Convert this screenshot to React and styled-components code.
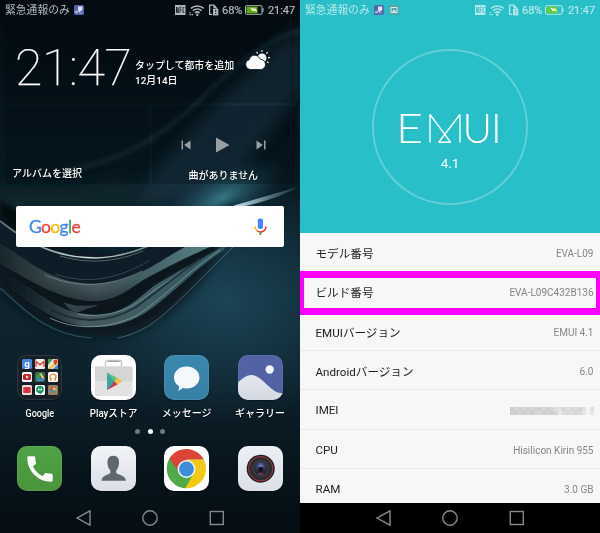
import React from "react";
import styled, { createGlobalStyle } from "styled-components";
import { MdCall, MdSkipNext, MdSkipPrevious } from "react-icons/md";

const GlobalStyle = createGlobalStyle`
  * { box-sizing: border-box; }
  body { margin: 0; background: #000; }
`;

const Screens = styled.div`
  display: flex;
  width: 600px;
  height: 533px;
  overflow: hidden;
  font-family: Roboto, "Noto Sans CJK JP", sans-serif;
`;

const Phone = styled.section`
  position: relative;
  isolation: isolate;
  display: flex;
  flex-direction: column;
  width: 300px;
  height: 533px;
  overflow: hidden;
  background: ${(p) => p.$bg};
`;

/* Status bar */
const Bar = styled.header`
  display: flex;
  align-items: center;
  flex: none;
  height: 20px;
  padding: 0 5px;
  font-size: 11px;
  line-height: 20px;
  white-space: nowrap;
  color: ${(p) => p.$color};
  svg { display: block; flex: none; }
`;
const Carrier = styled.span`
  width: 66px;
  margin: 1px 3px 0 0;
  font-size: 10.8px;
`;
const BarIcons = styled.div`
  display: flex;
  align-items: center;
  margin-left: auto;
`;
const Percent = styled.span`
  width: 21px;
  margin: 1px 2px 0 3px;
  -webkit-text-stroke: 0.2px currentColor;
`;
const Time = styled.span`
  width: 27px;
  margin: 1px 0 0 4px;
  letter-spacing: -0.08px;
  -webkit-text-stroke: 0.2px currentColor;
`;
const Notices = styled.div`
  display: flex;
  gap: 5px;
`;

function StatusBar({ color, hole, green, picture }) {
  return (
    <Bar $color={color}>
      <Carrier>緊急通報のみ</Carrier>
      <Notices>
        <svg width="10" height="10" viewBox="0 0 10 10">
          <rect width="10" height="10" rx="1.5" fill="#5465ae" />
          <path d="M4 1.5h4.3v4H7L6 7H4.5V5.500H4z" fill="#dfe3f5" />
          <path d="M1.500 6.200h2.200v1.500H1.500zM5 8h3" fill="#b9c1e6" stroke="#b9c1e6" strokeWidth=".7" />
        </svg>
        {picture && (
          <svg width="10" height="10" viewBox="0 0 10 10">
            <rect width="10" height="10" rx="1" fill="#5aa3a8" />
            <rect x="2" y="2.500" width="6" height="5" fill="none" stroke="#d3eef0" strokeWidth="1" />
            <path d="M3 6.800 5 4.500l2.200 2.300z" fill="#d3eef0" />
          </svg>
        )}
      </Notices>
      <BarIcons>
        <svg width="11" height="10" viewBox="0 0 11 10">
          <rect width="10.500" height="10" fill={color} />
          <path d="M1.500 8V2l1.700 6V2M5 8V2h1.700M5 5h1.500M9.500 2.500H8v5h1.500" fill="none" stroke={hole} strokeWidth=".8" />
        </svg>
        <svg width="22" height="12" viewBox="0 0 22 12">
          <g transform="translate(4.300 .2)" fill="none" stroke={color} strokeWidth="1.500">
            <path d="M.6 4.200a9.500 9.500 0 0 1 12.800 0" />
            <path d="M2.700 6.500a6.500 6.500 0 0 1 8.600 0" />
            <path d="M4.700 8.700a3.500 3.500 0 0 1 4.600 0" />
            <circle cx="7" cy="10.500" r=".5" fill={color} />
          </g>
          <path d="M3.500 8.700h1.200M5.500 10.700h1.500M3.500 10.700h1.200" stroke={color} strokeWidth="1.200" />
        </svg>
        <svg width="11" height="12" viewBox="0 0 11 12">
          <path d="M1.600 1.200v9.200h2.600M1 1.200h5l2.200 2.500v1.200" fill="none" stroke={color} strokeWidth="1.300" />
          <path d="M5.500 1v3h2.800z" fill={color} />
          <rect x="5" y="4.700" width="5.300" height="6.700" fill={color} />
          <path d="M7.700 6v2M7.700 9v1" stroke={hole} strokeWidth="1" />
        </svg>
        <Percent>68%</Percent>
        <svg width="19" height="10" viewBox="0 0 19 10">
          <rect x=".5" y=".7" width="16.500" height="8.600" rx="1" fill="none" stroke={color} />
          <rect x="1.500" y="1.700" width="11" height="6.600" fill={green} />
          <path d="M17.500 3h1v4h-1z" fill={color} />
          <path d="m5 2.500 4 1.300 1-.8 2.500 3.700-3.700-1.100-.8.900z" fill="#eaf5df" />
        </svg>
        <Time>21:47</Time>
      </BarIcons>
    </Bar>
  );
}

/* Android navigation keys */
const Nav = styled.nav`
  display: flex;
  justify-content: center;
  align-items: center;
  flex: none;
  height: 30px;
  margin-top: auto;
  gap: 50.500px;
  background: ${(p) => p.$bg};
  svg { display: block; fill: none; stroke: #85898b; stroke-width: 1.400; }
`;
function NavBar({ bg }) {
  return (
    <Nav $bg={bg}>
      <svg width="16" height="16" viewBox="0 0 16 16"><path d="M14 .8v14.400L1.200 8z" /></svg>
      <svg width="16" height="16" viewBox="0 0 16 16"><circle cx="8" cy="8" r="7.200" /></svg>
      <svg width="16" height="16" viewBox="0 0 16 16"><rect x="1.300" y="1.500" width="13" height="13" /></svg>
    </Nav>
  );
}

/* Home screen */
const WallpaperArt = styled.svg`
  position: absolute;
  inset: 0;
  z-index: -1;
`;
function Wallpaper() {
  return (
    <WallpaperArt width="300" height="533" viewBox="0 0 300 533" aria-hidden="true">
      <defs>
        <linearGradient id="base" x1="0" y1="0" x2="0" y2="1">
          <stop offset="0" stopColor="#030b11" />
          <stop offset=".3" stopColor="#071820" />
          <stop offset=".55" stopColor="#0d232e" />
          <stop offset=".7" stopColor="#0d212c" />
          <stop offset=".88" stopColor="#07141c" />
          <stop offset="1" stopColor="#050d13" />
        </linearGradient>
        <radialGradient id="blue"><stop offset="0" stopColor="#1c4658" stopOpacity=".95" /><stop offset="1" stopColor="#1c4354" stopOpacity="0" /></radialGradient>
        <radialGradient id="glow"><stop offset="0" stopColor="#3f8492" stopOpacity=".85" /><stop offset="1" stopColor="#1c4f63" stopOpacity="0" /></radialGradient>
        <linearGradient id="band" gradientUnits="userSpaceOnUse" x1="0" y1="0" x2="210" y2="0">
          <stop offset="0" stopColor="#18272c" /><stop offset=".2" stopColor="#36464a" />
          <stop offset=".45" stopColor="#5f7378" /><stop offset=".65" stopColor="#476468" /><stop offset="1" stopColor="#578085" />
        </linearGradient>
        <linearGradient id="shade" x1="0" y1="0" x2="0" y2="1">
          <stop offset="0" stopColor="#0a161c" stopOpacity="0" /><stop offset=".6" stopColor="#0a161c" stopOpacity=".1" /><stop offset="1" stopColor="#0a161c" stopOpacity=".6" />
        </linearGradient>
        <linearGradient id="band2" gradientUnits="userSpaceOnUse" x1="10" y1="0" x2="225" y2="0">
          <stop offset="0" stopColor="#0f2027" stopOpacity=".4" /><stop offset=".35" stopColor="#46595f" /><stop offset=".65" stopColor="#3d5b63" /><stop offset="1" stopColor="#2f545f" />
        </linearGradient>
        <linearGradient id="edge" gradientUnits="userSpaceOnUse" x1="0" y1="0" x2="180" y2="0">
          <stop offset="0" stopColor="#58757c" /><stop offset=".5" stopColor="#cbe0df" /><stop offset="1" stopColor="#7fa4aa" stopOpacity=".5" />
        </linearGradient>
        <linearGradient id="streak" gradientUnits="userSpaceOnUse" x1="215" y1="0" x2="300" y2="0">
          <stop offset="0" stopColor="#7ab4bd" stopOpacity=".5" /><stop offset=".25" stopColor="#c6e6e9" /><stop offset="1" stopColor="#3f6270" stopOpacity=".3" />
        </linearGradient>
        <filter id="b1"><feGaussianBlur stdDeviation=".6" /></filter>
        <filter id="b2"><feGaussianBlur stdDeviation="2" /></filter>
        <filter id="b3"><feGaussianBlur stdDeviation="4" /></filter>
        <filter id="b8" x="-50%" y="-50%" width="200%" height="200%"><feGaussianBlur stdDeviation="8" /></filter>
      </defs>
      <rect width="300" height="533" fill="url(#base)" />
      <ellipse cx="225" cy="300" rx="160" ry="125" fill="url(#blue)" />
      <g filter="url(#b8)">
        <path d="M300 25 205 115 130 200h90L300 90z" fill="#1c3546" opacity=".75" />
        <path d="M120 175 Q70 195 0 185v35h190z" fill="#12272e" opacity=".7" />
      </g>
      <ellipse cx="222" cy="198" rx="72" ry="28" fill="url(#glow)" transform="rotate(-28 222 198)" />
      <path d="M60 172Q140 160 200 100T300 30" fill="none" stroke="#2c4a58" strokeWidth="4" opacity=".5" filter="url(#b2)" />
      <path d="M0 205C35 240 70 253 105 254C170 250 200 210 240 205C225 240 200 310 130 333C80 345 30 318 0 290z" fill="#08151c" opacity=".9" filter="url(#b3)" />
      <path d="M0 202C20 212 40 225 70 247C40 245 15 235 0 215z" fill="#040c10" filter="url(#b2)" />
      <path d="M0 221C28 243 56 258 96 260C134 259 157 245 175 240L190 247C160 265 140 283 93 284C45 281 20 258 0 240z" fill="#0e1d25" filter="url(#b1)" />
      <g filter="url(#b1)">
        <path d="M0 243C30 262 52 283 93 284C135 283 160 260 185 247H210C180 260 160 271 145 279C128 290 115 301 93 301C58 300 30 280 0 264z" fill="url(#band)" />
        <path d="M0 243C30 262 52 283 93 284C135 283 160 260 185 247H210C180 260 160 271 145 279C128 290 115 301 93 301C58 300 30 280 0 264z" fill="url(#shade)" />
        <path d="M10 276C45 296 60 314 95 315C128 315 140 294 160 282C180 270 200 260 228 243L224 250C170 286 150 327 97 327C58 327 30 303 5 285z" fill="url(#band2)" />
        <path d="M52 291C70 304 110 313 152 277C170 268 195 257 206 250C185 265 165 273 147 287C130 301 118 312 96 313C76 312 62 302 52 291z" fill="#08141b" />
        <path d="M63 302C75 307 86 306 100 305C85 309 82 311 76 313C70 310 67 307 63 302z" fill="#304349" />
        <path d="M0 221C28 243 56 258 96 258C134 257 157 241 190 228" fill="none" stroke="url(#edge)" strokeWidth="1.600" />
        <path d="M60 256C92 265 118 261 143 251" fill="none" stroke="#52686e" strokeWidth="1" />
        <path d="M55 274C85 284 116 281 150 260" fill="none" stroke="#33474f" strokeWidth="1" />
        <path d="M45 275C75 288 108 288 142 271" fill="none" stroke="#84999e" strokeWidth=".9" opacity=".7" />
        <path d="M78 314C105 319 130 310 148 295C165 282 183 272 200 259" fill="none" stroke="#7b989d" strokeWidth=".9" opacity=".9" />
        <path d="M50 309C75 323 106 325 136 307C160 290 176 275 205 256" fill="none" stroke="#15272e" strokeWidth="1.800" opacity=".8" />
        <path d="M50 318C75 330 106 330 136 316C160 301 186 273 220 250" fill="none" stroke="#819ca1" strokeWidth="1" opacity=".85" />
        <path d="M118 338C155 330 170 309 233 247" fill="none" stroke="#6b8289" strokeWidth=".8" opacity=".8" />
        <path d="M0 288C25 310 48 336 92 338" fill="none" stroke="#2b4f5a" strokeWidth="1.200" />
        <path d="M218 211C240 203 268 196 300 186C275 200 250 206 218 211z" fill="url(#streak)" />
      </g>
    </WallpaperArt>
  );
}

const Widgets = styled.div`
  display: grid;
  grid-template-columns: 1fr 1fr;
  gap: 3px;
  height: 159px;
  margin: 5px 5px 0;
`;
const Tile = styled.div`
  background: rgba(0, 8, 14, 0.24);
  color: #fff;
  font-size: 10px;
  font-weight: 500;
  line-height: 15px;
  white-space: nowrap;
  text-shadow: 0 0 2px rgba(0, 0, 0, 0.7);
`;
const WeatherTile = styled(Tile)`
  grid-column: 1 / 3;
  display: flex;
  height: 78px;
  padding-left: 10px;
`;
const Clock = styled.div`
  width: 120px;
  margin: 15px 0 0;
  font-size: 50px;
  font-weight: 100;
  line-height: 56px;
  letter-spacing: -0.4px;
  -webkit-text-stroke: 0.25px #fff;
`;
const City = styled.div`
  width: 111px;
  padding-top: 33px;
  font-size: 9.950px;
`;
const CloudIcon = styled.svg`
  margin-top: 24px;
  margin-left: -1px;
`;
const AlbumTile = styled(Tile)`
  height: 78px;
  padding: 60px 0 0 7px;
`;
const MusicTile = styled(Tile)`
  height: 78px;
  display: flex;
  flex-direction: column;
  align-items: center;
  padding-top: 27px;
`;
const Player = styled.div`
  display: flex;
  align-items: center;
  height: 24px;
  gap: 21.500px;
  margin-bottom: 11px;
  color: #98a0a4;
  svg { display: block; }
`;

const Search = styled.div`
  display: flex;
  align-items: center;
  justify-content: space-between;
  height: 41px;
  margin: 22px 16px 0;
  padding: 0 17px 0 13px;
  border-radius: 2px;
  background: #fff;
`;
const Logo = styled.div`
  font-family: Lato, sans-serif;
  font-size: 17.500px;
  line-height: 24px;
  letter-spacing: -0.65px;
`;
const Letter = styled.span`
  color: ${(p) => p.$c};
  -webkit-text-stroke: 0.3px ${(p) => p.$c};
`;

const AppRow = styled.div`
  display: grid;
  grid-template-columns: repeat(4, 73.400px);
  justify-content: center;
  margin-top: ${(p) => p.$top}px;
`;
const AppItem = styled.div`
  display: flex;
  flex-direction: column;
  align-items: center;
  gap: 5px;
  height: ${(p) => p.$h}px;
  color: #fff;
  font-size: 10px;
  font-weight: 500;
  line-height: 18px;
  white-space: nowrap;
  text-shadow: 0 1px 1px #000;
`;
const AppLabel = styled.span`
  transform: scaleX(${(p) => p.$squeeze || 1});
`;
const AppIcon = styled.div`
  display: flex;
  align-items: center;
  justify-content: center;
  flex: none;
  width: 45px;
  height: 45px;
  overflow: hidden;
  border-radius: 10px;
  background: ${(p) => p.$bg};
  box-shadow: inset 0 0 0 1px ${(p) => p.$ring || "rgba(255,255,255,.08)"}, 0 1px 1px rgba(0, 0, 0, 0.4);
  svg { display: block; }
`;
const Folder = styled.div`
  display: grid;
  grid-template-columns: repeat(3, 10px);
  gap: 2.700px;
`;
const Mini = styled.svg`
  width: 10px;
  height: 10px;
  border-radius: 1.500px;
  background: ${(p) => p.$bg};
`;
const MiniG = styled.span`
  display: grid;
  place-items: center;
  width: 10px;
  height: 10px;
  border-radius: 1.500px;
  background: #4a86e8;
  color: #fff;
  font: 700 9px/9px "Noto Sans", sans-serif;
  text-shadow: none;
  padding-bottom: 2px;
`;
const Pager = styled.div`
  display: flex;
  justify-content: center;
  align-items: center;
  gap: 7.500px;
  height: 6px;
  margin-top: 4px;
`;
const Dot = styled.i`
  width: 5px;
  height: 5px;
  border-radius: 50%;
  background: ${(p) => (p.$on ? "#fff" : "#70787c")};
`;

const googleLetters = [
  ["G", "#4285f4"], ["o", "#ea4335"], ["o", "#fbbc05"],
  ["g", "#4285f4"], ["l", "#34a853"], ["e", "#ea4335"],
];

function GoogleFolder() {
  return (
    <Folder>
      <MiniG>g</MiniG>
      <Mini viewBox="0 0 10 10" $bg="#f1eeee"><path d="M1 8V2.500l4 3.300 4-3.300V8" fill="none" stroke="#d84336" strokeWidth="1.300" /></Mini>
      <Mini viewBox="0 0 10 10" $bg="#e9e4cf">
        <path d="M0 0h5L0 6z" fill="#3f9b57" /><path d="M0 10 10 0v3L3 10z" fill="#f2c53d" /><path d="M5 10l5-5v5z" fill="#4b88e0" />
        <path d="M7.500 6.500C6 4 5.500 3.500 5.500 2.500a2 2 0 0 1 4 0c0 1-.5 1.500-2 4z" fill="#d8402f" />
      </Mini>
      <Mini viewBox="0 0 10 10" $bg="#fff"><rect x="1" y="2" width="8" height="6" rx="1.500" fill="#d02525" /><path d="m4 3.500 3 1.500-3 1.500z" fill="#fff" /></Mini>
      <Mini viewBox="0 0 10 10" $bg="#3f6b56"><path d="M3.500 1.500h3L3 8 1 6z" fill="#31a35f" /><path d="M4.500 1.500h2L9.500 6.500H7z" fill="#f7cf42" /><path d="M3.500 6.500h6L8 9H2z" fill="#4587e8" /></Mini>
      <Mini viewBox="0 0 10 10" $bg="#fff"><path d="M2 6V5a3 3 0 0 1 6 0v1" fill="none" stroke="#ef7d24" strokeWidth="1.200" /><path d="M1.500 5.500h2V9h-1zM8.500 5.500h-2V9h1z" fill="#ef7d24" /></Mini>
      <Mini viewBox="0 0 10 10" $bg="#e9dede"><rect x="1" y="2" width="8" height="6" fill="#d5303a" /><path d="M1.800 2v6M8.200 2v6" stroke="#f6bcbc" strokeWidth=".8" strokeDasharray="1 .7" /></Mini>
      <Mini viewBox="0 0 10 10" $bg="#fff"><circle cx="5" cy="4.600" r="3.800" fill="#159a60" /><path d="M5 7.500h2L5 9.800z" fill="#159a60" /><path d="M3 3.500h1.500v2H3zM5.500 3.500H7v2H5.500z" fill="#fff" /></Mini>
      <Mini viewBox="0 0 10 10" $bg="#9a8264"><path d="M5 1v4H2z" fill="#e34b3d" /><path d="M9 5H5V2z" fill="#f5c342" /><path d="M5 9V5h3z" fill="#4aa35f" /><path d="M1 5h4v3z" fill="#4687e9" /></Mini>
    </Folder>
  );
}

const PlayArt = () => (
  <svg width="45" height="45" viewBox="0 0 45 45">
    <path d="M14.500 12V6.500q0-1 1-1h14q1 0 1 1V12" fill="none" stroke="#c8cacb" strokeWidth="1.500" />
    <path d="M16.500 6.300h12" stroke="#8f9495" strokeWidth="1" />
    <path d="M4 11.500h37.500V39q0 2-2 2h-34q-1.500 0-1.500-2z" fill="#e2e2e2" />
    <path d="M4 11.500h37.500V26H4z" fill="#d5d5d5" />
    <path d="M16 17.500 25.500 26.300 16 35z" fill="#38a8a4" />
    <path d="M16 17.500 26.500 23l-3 3.300z" fill="#65c17e" />
    <path d="m26 22.500 5.300 3.800-5.300 3.500-2.500-3.500z" fill="#f3bd46" />
    <path d="m23.500 26.300 3 3.200L16 35z" fill="#c63b52" />
  </svg>
);
const MessageArt = () => (
  <svg width="45" height="45" viewBox="0 0 45 45">
    <path d="M22.500 11.500c7.300 0 13 4.700 13 11s-5.700 11-13 11c-1.500 0-2.800-.2-4-.5-1 1.300-2.600 2.200-4.500 2.500.9-1.300 1.100-2.600 1-4.200-3.300-2-5-5.100-5-8.800 0-6.300 5.200-11 12.500-11z" fill="#f5f9fc" />
  </svg>
);
const GalleryArt = () => (
  <svg width="45" height="45" viewBox="0 0 45 45">
    <defs><linearGradient id="hill" x1="0" y1="0" x2="0" y2="1"><stop stopColor="#e3e7ee" /><stop offset="1" stopColor="#d4d9e2" /></linearGradient></defs>
    <path d="M0 27.500C7 21.500 13 16.500 22 23.500C30 30 37 39.500 45 38v7H0z" fill="url(#hill)" />
    <circle cx="31.700" cy="14.500" r="4.200" fill="#f0f3f9" />
  </svg>
);
const ContactArt = () => (
  <svg width="45" height="45" viewBox="0 0 45 45">
    <path d="M22.300 9.700c4.500 0 6 3.300 5.700 7.500-.2 3.300-1.200 5.800-2.700 7v2.500c0 2 9.200 2 9.700 8H10.500c.4-6 8.800-6 8.800-8v-2.500c-1.600-1.200-2.600-3.700-2.800-7-.2-4.200 1.300-7.500 5.800-7.500z" fill="#5f686f" />
  </svg>
);
const ChromeArt = () => (
  <svg width="45" height="45" viewBox="0 0 45 45">
    <path d="M22.500 22.500V13.500h17.300A19.800 19.800 0 0 1 21.500 42.300z" fill="#f3c912" />
    <path d="M22.500 22.500 30 27 21.300 42.300A19.800 19.800 0 0 1 5.600 12.300z" fill="#53a947" />
    <path d="M5.600 12.300A19.800 19.800 0 0 1 39.800 13.500H23L14 25z" fill="#dc4437" />
    <circle cx="22.500" cy="23" r="9" fill="#f1f4ef" />
    <circle cx="22.500" cy="23" r="7.400" fill="#3c8ddb" />
  </svg>
);
const CameraArt = () => (
  <svg width="45" height="45" viewBox="0 0 45 45">
    <defs>
      <radialGradient id="lens" cx=".5" cy=".3" r=".6"><stop offset="0" stopColor="#6c8be0" /><stop offset=".45" stopColor="#3b3f6b" /><stop offset="1" stopColor="#241d28" /></radialGradient>
    </defs>
    <circle cx="22.700" cy="22.700" r="14" fill="#201f22" />
    <circle cx="22.700" cy="22.700" r="12.200" fill="#2d2c2e" stroke="#b43745" strokeWidth="1" />
    <circle cx="22.700" cy="22.700" r="8.600" fill="#39383b" />
    <circle cx="22.700" cy="22.700" r="6.600" fill="url(#lens)" />
    <circle cx="22.700" cy="23.500" r="2.800" fill="#16161f" />
    <ellipse cx="22.700" cy="28" rx="3" ry="1" fill="#66405e" />
  </svg>
);

function HomeScreen() {
  return (
    <Phone $bg="#07151d">
      <Wallpaper />
      <StatusBar color="#b3b8ba" hole="#0a1218" green="#65a81d" />
      <Widgets>
        <WeatherTile>
          <Clock>21:47</Clock>
          <City>タップして都市を追加<br />12月14日</City>
          <CloudIcon width="26" height="22" viewBox="0 0 26 22">
            <circle cx="17" cy="9" r="4.500" fill="#fff" />
            <path d="M17 1v2M11.500 3l1.300 1.700M22.700 3.200l-1.500 1.500M23 8.600h2M22 12.800l1.500 1" stroke="#fff" strokeWidth="1.100" />
            <path d="M5 20.500a5 5 0 0 1-.8-9.700C5 7.500 8 5.500 11 6.500c2.200.6 3.500 2 4.200 3.700 3 .2 5.300 2.400 5.300 5.200 0 3-2.300 5.100-5.200 5.100z" fill="#fff" stroke="#09141b" strokeWidth=".8" />
          </CloudIcon>
        </WeatherTile>
        <AlbumTile>アルバムを選択</AlbumTile>
        <MusicTile>
          <Player>
            <MdSkipPrevious size={18} />
            <svg width="14" height="16" viewBox="0 0 14 16"><path d="M0 .5v15L13.500 8z" fill="currentColor" /></svg>
            <MdSkipNext size={18} />
          </Player>
          曲がありません
        </MusicTile>
      </Widgets>
      <Search>
        <Logo>{googleLetters.map(([ch, c], i) => <Letter key={i} $c={c}>{ch}</Letter>)}</Logo>
        <svg width="13" height="18" viewBox="0 0 13 18">
          <rect x="3.800" y=".5" width="5.200" height="10.500" rx="2" fill="#4285f4" />
          <path d="M1 8.500a5.500 5.500 0 0 0 2 4.200" fill="none" stroke="#fbbc05" strokeWidth="1.500" />
          <path d="M2.800 12.500a5.500 5.500 0 0 0 9.200-4" fill="none" stroke="#ea4335" strokeWidth="1.500" />
          <path d="M6.400 14.300V17" stroke="#34a853" strokeWidth="1.800" />
        </svg>
      </Search>
      <AppRow $top={107.500}>
        <AppItem $h={70}><AppIcon $bg="#171f27" $ring="#2f3840"><GoogleFolder /></AppIcon><AppLabel $squeeze={0.9}>Google</AppLabel></AppItem>
        <AppItem $h={70}><AppIcon $bg="#fdfdfd"><PlayArt /></AppIcon><AppLabel $squeeze={0.97}>Playストア</AppLabel></AppItem>
        <AppItem $h={70}><AppIcon $bg="linear-gradient(#3b88b0,#3780a5)"><MessageArt /></AppIcon><AppLabel>メッセージ</AppLabel></AppItem>
        <AppItem $h={70}><AppIcon $bg="#5361a5"><GalleryArt /></AppIcon><AppLabel>ギャラリー</AppLabel></AppItem>
      </AppRow>
      <Pager><Dot /><Dot $on /><Dot /></Pager>
      <AppRow $top={11.500}>
        <AppItem $h={45}><AppIcon $bg="linear-gradient(#4fa245,#4a943c)"><MdCall size={34} color="#fafffa" /></AppIcon></AppItem>
        <AppItem $h={45}><AppIcon $bg="linear-gradient(#f2f4f7,#dadfe7)"><ContactArt /></AppIcon></AppItem>
        <AppItem $h={45}><AppIcon $bg="#fff"><ChromeArt /></AppIcon></AppItem>
        <AppItem $h={45}><AppIcon $bg="linear-gradient(#eceff4,#dce0e8)"><CameraArt /></AppIcon></AppItem>
      </AppRow>
      <NavBar bg="transparent" />
    </Phone>
  );
}

/* About screen */
const Hero = styled.div`
  display: flex;
  justify-content: center;
  flex: none;
  height: 213px;
  padding-top: 29px;
`;
const Ring = styled.div`
  display: flex;
  flex-direction: column;
  align-items: center;
  width: 156px;
  height: 156px;
  padding-top: 51px;
  border: 2px solid #62d0d6;
  border-radius: 50%;
  color: #fff;
`;
const EmuiMark = styled.svg`
  display: block;
  flex: none;
  fill: #fff;
  font-family: Lato, sans-serif;
  font-weight: 300;
`;
const Version = styled.div`
  margin-top: 0;
  font-size: 13.500px;
  line-height: 18px;
`;
const List = styled.dl`
  position: relative;
  flex: none;
  height: 270px;
  margin: 0;
  background: #f7f7f7;
  overflow: hidden;
`;
const Row = styled.div`
  display: flex;
  align-items: center;
  justify-content: space-between;
  height: 39.330px;
  padding: 2px 6.500px 0 15.500px;
  border-bottom: 1px solid #e9e9e9;
  white-space: nowrap;
`;
const Name = styled.dt`
  font-size: 11.600px;
  color: #1d1d1d;
`;
const Value = styled.dd`
  margin: 1px 0 0;
  font-size: 10px;
  color: #858585;
`;
const Highlight = styled.div`
  position: absolute;
  top: 38px;
  left: 0;
  width: 300px;
  height: 44px;
  border: solid #f0f;
  border-width: 7px 4px;
`;
const Mosaic = styled.div`
  display: grid;
  grid-template-columns: repeat(21, 4px);
  grid-auto-rows: 4px;
`;
const Cell = styled.i`
  background: ${(p) => p.$c};
`;

const mosaicTones = [
  205, 212, 208, 215, 207, 213, 209, 207, 218, 208, 214, 222, 226, 214, 223, 215, 219, 213, 225, 244, 224,
  208, 205, 213, 207, 211, 205, 212, 215, 207, 211, 207, 214, 232, 221, 216, 221, 213, 218, 228, 245, 232,
];

const specs = [
  ["モデル番号", "EVA-L09"],
  ["ビルド番号", "EVA-L09C432B136"],
  ["EMUIバージョン", "EMUI 4.1"],
  ["Androidバージョン", "6.0"],
  ["IMEI", null],
  ["CPU", "Hisilicon Kirin 955"],
  ["RAM", "3.0 GB"],
];

function AboutScreen() {
  return (
    <Phone $bg="#29bfc8">
      <StatusBar color="#b5e8eb" hole="#29bfc8" green="#62ce39" picture />
      <Hero>
        <Ring>
          <EmuiMark width="108" height="52" viewBox="0 0 108 52" aria-label="EMUI">
            <text x="0" y="40.500" fontSize="41" textLength="27" lengthAdjust="spacingAndGlyphs">E</text>
            <path d="M34 40.500V12.500L54.700 40.300H42.700L64 12.500V40.500" fill="none" stroke="#fff" strokeWidth="1.400" strokeLinejoin="bevel" />
            <text x="66.500" y="40.500" fontSize="41" textLength="29.500" lengthAdjust="spacingAndGlyphs">U</text>
            <text x="95" y="40.500" fontSize="41">I</text>
          </EmuiMark>
          <Version>4.1</Version>
        </Ring>
      </Hero>
      <List>
        {specs.map(([name, value]) => (
          <Row key={name}>
            <Name>{name}</Name>
            <Value>
              {value ?? <Mosaic>{mosaicTones.map((t, i) => <Cell key={i} $c={`rgb(${t},${t},${t})`} />)}</Mosaic>}
            </Value>
          </Row>
        ))}
        <Highlight />
      </List>
      <NavBar bg="#000" />
    </Phone>
  );
}

export default function App() {
  return (
    <>
      <GlobalStyle />
      <Screens>
        <HomeScreen />
        <AboutScreen />
      </Screens>
    </>
  );
}
